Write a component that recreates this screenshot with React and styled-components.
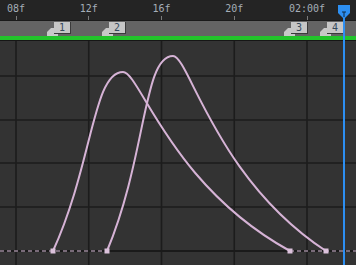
import React from "react";
import styled, {createGlobalStyle} from "styled-components";

const FRAME_PX = 18.1875;
const ORIGIN_X = 16;
const fx = f => ORIGIN_X + (f - 8) * FRAME_PX;

const GlobalStyle = createGlobalStyle`
    html, body {
        margin: 0;
        padding: 0;
        background: #333333;
        overflow: hidden;
    }
`;

const Panel = styled.div`
    position: relative;
    width: 356px;
    height: 265px;
    overflow: hidden;
    display: flex;
    flex-direction: column;
    background: #333333;
    font-family: "Liberation Sans", Arial, sans-serif;
`;

// ruler
const Ruler = styled.div`
    height: 20px;
    flex: none;
    background: #242424;
    display: flex;
    margin-left: ${ORIGIN_X - FRAME_PX * 2}px;
`;

const RulerCell = styled.div`
    width: ${FRAME_PX * 4}px;
    flex: none;
    display: flex;
    flex-direction: column;
    align-items: center;
    justify-content: space-between;
    padding-top: 3px;
    box-sizing: border-box;
`;

const RulerLabel = styled.span`
    font-family: "DejaVu Sans Mono", "Liberation Mono", monospace;
    font-size: 10px;
    line-height: 11px;
    color: #a5aeb8;
    white-space: nowrap;
`;

const Tick = styled.span`
    width: 1px;
    height: 4px;
    background: #7a7a7a;
`;

// marker bar
const MarkerBar = styled.div`
    position: relative;
    height: 15px;
    flex: none;
    background: #646464;
    border-top: 1px solid #1a1a1a;
`;

const Marker = styled.div`
    position: absolute;
    bottom: 0;
    width: 30px;
    height: 15px;
`;

const MarkerFoot = styled.svg`
    position: absolute;
    left: 0;
    bottom: 0;
`;

const MarkerTag = styled.div`
    position: absolute;
    left: 7px;
    top: 1px;
    width: 17px;
    height: 12px;
    box-sizing: border-box;
    background: #c6c6c6;
    border-right: 1px solid #3a3a3a;
    border-bottom: 1px solid #3a3a3a;
    font-family: "DejaVu Sans Mono", "Liberation Mono", monospace;
    font-size: 10px;
    line-height: 11px;
    text-align: center;
    color: #34495c;
`;

const GreenBar = styled.div`
    height: 4px;
    flex: none;
    background: #22c42b;
    border-bottom: 1px solid #161616;
`;

const Graph = styled.div`
    flex: 1;
    position: relative;
    background: #333333;
`;

const PlayheadLine = styled.div`
    position: absolute;
    top: 14px;
    bottom: 0;
    left: ${p => p.$x - 1}px;
    width: 2px;
    background: #2d8ff2;
`;

const PlayheadHead = styled.svg`
    position: absolute;
    top: 5px;
    left: ${p => p.$x - 6}px;
`;

const rulerText = {8: "08f", 12: "12f", 16: "16f", 20: "20f", 24: "02:00f"};

const markers = [
    {id: 1, frame: 10},
    {id: 2, frame: 13},
    {id: 3, frame: 23},
    {id: 4, frame: 25},
];

const gridX = [8, 12, 16, 20, 24].map(fx);
const gridY = [76, 120, 163, 207];
const BASE = 251;

const curves = [
    "M53,251 C93,163 93,72 123,72 C140,72 170,185 290,251",
    "M107,251 C147,155 143,56 173,56 C189,56 216,179 326,251",
];

const App = () => {
    const playX = fx(26) + 0.5;
    return (
        <Panel>
            <GlobalStyle/>
            <Ruler>
                {[8, 12, 16, 20, 24, 28].map(f => (
                    <RulerCell key={f}>
                        <RulerLabel>{rulerText[f] || ""}</RulerLabel>
                        <Tick/>
                    </RulerCell>
                ))}
            </Ruler>
            <MarkerBar>
                {markers.map(m => (
                    <Marker key={m.id} style={{left: Math.round(fx(m.frame)) - 5}}>
                        <MarkerFoot width="11" height="8" viewBox="0 0 11 8">
                            <polygon points="0,8 0,4 4,0 7,0 11,4 11,8" fill="#c8c8c8"/>
                        </MarkerFoot>
                        <MarkerTag>{m.id}</MarkerTag>
                    </Marker>
                ))}
            </MarkerBar>
            <GreenBar/>
            <Graph>
                <svg width="356" height="224" viewBox="0 41 356 224" style={{display: "block"}}>
                    {gridX.map(x => (
                        <line key={x} x1={x} x2={x} y1="41" y2="265" stroke="#1c1c1c" strokeWidth="1.6"/>
                    ))}
                    {gridY.map(y => (
                        <line key={y} x1="0" x2="356" y1={y} y2={y} stroke="#1c1c1c" strokeWidth="1.6"/>
                    ))}
                    <line x1="0" x2="356" y1={BASE} y2={BASE} stroke="#1a1a1a" strokeWidth="2"/>
                    <line x1="0" x2="107" y1={BASE} y2={BASE} stroke="#d8bcd8" strokeWidth="1" strokeDasharray="4 3"/>
                    <line x1="290" x2="356" y1={BASE} y2={BASE} stroke="#d8bcd8" strokeWidth="1" strokeDasharray="4 3"/>
                    {curves.map((d, i) => (
                        <path key={i} d={d} fill="none" stroke="#d6b3d6" strokeWidth="2"/>
                    ))}
                    {[53, 107, 290, 326].map(x => (
                        <rect key={x} x={x - 2.5} y={BASE - 2.5} width="5" height="5" fill="#dcc2dc"/>
                    ))}
                </svg>
            </Graph>
            <PlayheadLine $x={playX}/>
            <PlayheadHead $x={playX} width="12" height="14" viewBox="0 0 12 14">
                <path d="M0,0 H12 V8 L6,14 L0,8 Z" fill="#2d8ff2"/>
                <path d="M4,7 H8 M6,7 V12" stroke="#0f2a44" strokeWidth="1"/>
            </PlayheadHead>
        </Panel>
    );
};

export default App;
